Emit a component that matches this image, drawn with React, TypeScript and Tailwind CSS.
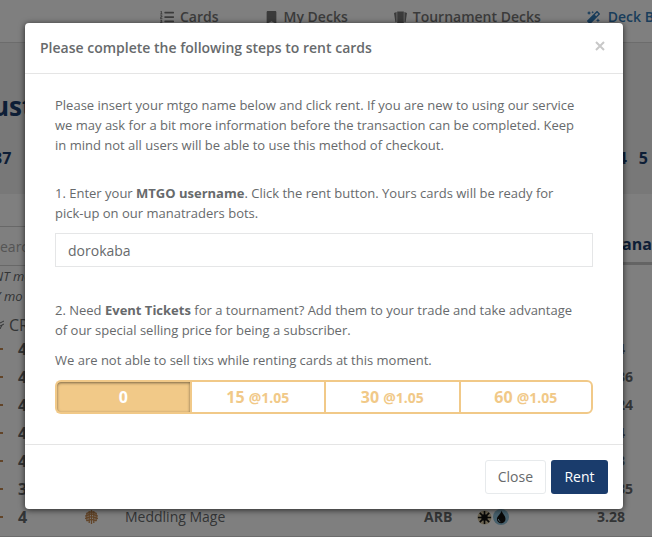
import { useState } from "react";
import { FaBookmark, FaListOl, FaMagic } from "react-icons/fa";

type Row = {
    qty: number;
    price: string;
    name?: string;
    set?: string;
};

const rows: Row[] = [
    { qty: 4, price: "3.44" },
    { qty: 4, price: "12.36" },
    { qty: 4, price: "12.24" },
    { qty: 4, price: "3.44" },
    { qty: 4, price: "3.43" },
    { qty: 3, price: "12.35" },
    { qty: 4, price: "3.28", name: "Meddling Mage", set: "ARB" },
];

const tickets = [
    { amount: 0, rate: "" },
    { amount: 15, rate: "@1.05" },
    { amount: 30, rate: "@1.05" },
    { amount: 60, rate: "@1.05" },
];

function CardsIcon() {
    return (
        <svg width="13" height="12" viewBox="0 0 13 12" fill="currentColor" aria-hidden="true">
            <path d="M3.2 .5h6.600V12H3.200z" />
            <path d="M0 2l2.600-.9V11l-1.200.3zM13 2l-2.600-.9V11l1.200.3z" />
        </svg>
    );
}

function SetIcon() {
    return (
        <svg width="13" height="14" viewBox="0 0 13 14" fill="none" stroke="#c58950" strokeWidth="1.3" aria-hidden="true">
            <path d="M6.500 0v14M4.200 1v12M8.800 1v12M1.900 3v8M11.100 3v8" />
            <path d="M0 6.200l6.500-2.400L13 6.200M1.500 3.400l5-1.600 5 1.600M0 8.500l6.500-1.800L13 8.500M1.500 10.800l5-1.400 5 1.400" />
        </svg>
    );
}

function WhiteMana() {
    return (
        <svg width="15" height="15" viewBox="0 0 16 16" aria-hidden="true">
            <circle cx="8" cy="8" r="7.500" fill="#d9c9a5" />
            <circle cx="8" cy="8" r="3.400" fill="#111" />
            <path d="M8 1v14M1 8h14M3 3l10 10M13 3L3 13" stroke="#111" strokeWidth="1.700" />
        </svg>
    );
}

function BlueMana() {
    return (
        <svg width="16" height="16" viewBox="0 0 16 16" aria-hidden="true">
            <circle cx="8" cy="8" r="8" fill="#8fc0d8" />
            <path d="M8.500 1.500C9 4.500 12.500 6.500 12.500 10a4.300 4.300 0 0 1-8.600 0C3.900 7 8 5 8.500 1.500z" fill="#111" />
            <path d="M5.300 10a2.800 2.800 0 0 0 2 2.600" stroke="#8fc0d8" fill="none" />
        </svg>
    );
}

function DeckPage() {
    return (
        <div className="h-screen overflow-hidden bg-[#f0f0f0] text-[#676a6c]">
            <nav className="flex h-[43px] items-start gap-[46px] whitespace-nowrap border-b border-[#d8d8d8] bg-white pt-[7px] pl-[160px] text-sm leading-5 font-semibold text-[#777]">
                <a href="#cards" className="flex items-center gap-[6px]">
                    <FaListOl size={14} /> Cards
                </a>
                <a href="#my-decks" className="flex items-center gap-[6px]">
                    <FaBookmark size={13} /> My Decks
                </a>
                <a href="#tournament" className="flex items-center gap-[6px]">
                    <CardsIcon /> Tournament Decks
                </a>
                <a href="#builder" className="flex items-center gap-[8px] text-[#337ab7]">
                    <FaMagic size={13} /> Deck Builder
                </a>
            </nav>

            <header className="flex h-[151px] flex-col pt-[47px] font-bold text-[#1a3c6c]">
                <h1 className="-ml-[8px] text-[26px] leading-8">ust</h1>
                <div className="mt-[26px] flex justify-between text-base leading-5">
                    <span className="-ml-[7px]">37</span>
                    <span className="flex gap-3 pr-[4px]">
                        <span>4</span>
                        <span>5</span>
                    </span>
                </div>
            </header>

            <main className="border-b border-[#d8d8d8] bg-white pb-[5px]">
                <div className="flex justify-between">
                    <section className="w-1/3 pt-[32px]">
                        <input
                            type="text"
                            aria-label="Search"
                            placeholder="earch"
                            className="block h-[40px] w-full border-y border-[#d0d0d0] text-sm placeholder:text-[#aaa]"
                        />
                        <p className="-ml-[6px] text-[13px] leading-5 italic">
                            NT mo
                            <br />Y mo
                        </p>
                    </section>
                    <section className="w-[60px] pt-[40px]">
                        <h2 className="border-b-[3px] border-[#c8c8c8] pb-[8px] pl-[15px] text-base leading-5 font-bold text-[#1a3c6c]">
                            Mana
                        </h2>
                    </section>
                </div>
                <h3 className="flex items-center gap-[4px] pt-[9px] text-base leading-5">
                    <svg width="5" height="12" viewBox="0 0 5 12" fill="none" stroke="currentColor" aria-hidden="true">
                        <path d="M0 4l4-2M0 7l4-2M0 10l2-4" />
                    </svg>
                    CR
                </h3>
                <table className="w-full table-fixed text-sm">
                    <tbody>
                        {rows.map((row, idx) => (
                            <tr key={idx} className="h-[28px]">
                                <td className="w-[18px]">
                                    <span className="block h-[2px] w-[3px] bg-[#c58950]" />
                                </td>
                                <td className="w-[67px] text-base leading-5 font-bold">{row.qty}</td>
                                <td className="w-[40px]">{row.name && <SetIcon />}</td>
                                <td>{row.name}</td>
                                <td className="w-[53px] font-bold">{row.set}</td>
                                <td className="w-[120px]">
                                    {row.set && (
                                        <span className="flex items-center gap-[1px]">
                                            <WhiteMana />
                                            <BlueMana />
                                        </span>
                                    )}
                                </td>
                                <td className="w-[55px] font-bold">{row.price}</td>
                            </tr>
                        ))}
                    </tbody>
                </table>
            </main>
        </div>
    );
}

export default function App() {
    const [username, setUsername] = useState("dorokaba");
    const [selected, setSelected] = useState(0);

    return (
        <div className="relative font-['Open_Sans',sans-serif]">
            <DeckPage />

            <div className="absolute inset-0 bg-black/50 pt-[23px] pr-[29px] pl-[25px]">
                <div
                    role="dialog"
                    aria-labelledby="rent-title"
                    className="mx-auto max-w-[600px] rounded-[4px] bg-white text-[13px] leading-5 text-[#676a6c] shadow-[0_1px_6px_rgba(0,0,0,0.7)]"
                >
                    <header className="flex items-start justify-between border-b border-[#e5e5e5] p-[15px]">
                        <h2 id="rent-title" className="text-sm leading-5 font-semibold">
                            Please complete the following steps to rent cards
                        </h2>
                        <button type="button" aria-label="Dismiss" className="p-[2px] text-[#c8c8c8]">
                            <svg width="12" height="12" viewBox="0 0 12 12" stroke="currentColor" strokeWidth="2" aria-hidden="true">
                                <path d="M2 2l8 8M10 2l-8 8" />
                            </svg>
                        </button>
                    </header>

                    <div className="px-[30px] pt-[21px] pb-[30px]">
                        <p>
                            Please insert your mtgo name below and click rent. If you are new to using our service
                            we may ask for a bit more information before the transaction can be completed. Keep
                            <br />
                            in mind not all users will be able to use this method of checkout.
                        </p>

                        <label htmlFor="username" className="mt-[28px] block">
                            1. Enter your <b>MTGO username</b>. Click the rent button. Yours cards will be ready for
                            <br />
                            pick-up on our manatraders bots.
                        </label>
                        <input
                            id="username"
                            type="text"
                            value={username}
                            onChange={(e) => setUsername(e.target.value)}
                            className="mt-[10px] block h-[34px] w-full border border-[#e5e6e7] px-3 text-sm"
                        />

                        <p className="mt-[33px]">
                            2. Need <b>Event Tickets</b> for a tournament? Add them to your trade and take advantage
                            <br />
                            of our special selling price for being a subscriber.
                        </p>
                        <p className="mt-[10px]">We are not able to sell tixs while renting cards at this moment.</p>

                        <div className="mt-[10px] grid h-[34px] grid-cols-4">
                            {tickets.map((t) => (
                                <button
                                    key={t.amount}
                                    type="button"
                                    aria-pressed={selected === t.amount}
                                    onClick={() => setSelected(t.amount)}
                                    className={`border-y-2 border-l-2 border-[#f1c988] text-base leading-5 font-bold first:rounded-l-[6px] last:rounded-r-[6px] last:border-r-2 ${selected === t.amount
                                            ? "bg-[#f1c988] text-white shadow-[inset_0_1px_3px_rgba(0,0,0,0.5)]"
                                            : "bg-white text-[#f1c988]"
                                        }`}
                                >
                                    {t.amount} {t.rate && <span className="text-sm">{t.rate}</span>}
                                </button>
                            ))}
                        </div>
                    </div>

                    <footer className="flex justify-end gap-[5px] border-t border-[#e5e5e5] p-[15px] text-sm">
                        <button type="button" className="h-[34px] rounded-[3px] border border-[#e7eaec] px-3">
                            Close
                        </button>
                        <button type="button" className="h-[34px] min-w-[57px] rounded-[3px] bg-[#1a3c6c] px-3 text-white">
                            Rent
                        </button>
                    </footer>
                </div>
            </div>
        </div>
    );
}
